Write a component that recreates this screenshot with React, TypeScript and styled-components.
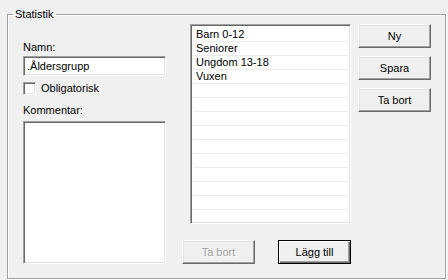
import React from 'react';
import styled, { createGlobalStyle } from 'styled-components';

const GlobalStyle = createGlobalStyle`
  html, body {
    margin: 0;
    padding: 0;
    background: #f0f0f0;
    width: 448px;
    height: 280px;
    overflow: hidden;
    font-family: "Liberation Sans", Arial, sans-serif;
    font-size: 11px;
    color: #000;
  }
`;

const Window = styled.div`
  padding: 8px 0 0 7px;
`;

const GroupBox = styled.fieldset`
  box-sizing: border-box;
  width: 439px;
  height: 271px;
  margin: 0;
  padding: 0 0 0 15px;
  border: 1px solid #a0a0a0;
  box-shadow: 1px 1px 0 #fff, inset 1px 1px 0 #fff;
`;

const Legend = styled.legend`
  margin-left: -10px;
  padding: 0 2px;
  line-height: 13px;
`;

const Body = styled.div`
  display: flex;
`;

const LeftColumn = styled.div`
  display: flex;
  flex-direction: column;
  width: 143px;
  padding-top: 20px;
`;

const Label = styled.div<{ $gap: number }>`
  line-height: 13px;
  margin-top: ${(p) => p.$gap}px;
`;

const sunken = `
  box-sizing: border-box;
  background: #fff;
  border-style: solid;
  border-width: 1px;
  border-color: #a0a0a0 #fff #fff #a0a0a0;
  box-shadow: inset 1px 1px 0 #696969, inset -1px -1px 0 #e3e3e3;
`;

const TextBox = styled.div`
  ${sunken}
  height: 20px;
  margin-top: 2px;
  padding: 3px 0 0 3px;
  line-height: 13px;
`;

const CheckRow = styled.label`
  display: flex;
  align-items: center;
  gap: 5px;
  margin-top: 6px;
  height: 13px;
  line-height: 13px;
`;

const CheckBox = styled.span`
  ${sunken}
  width: 13px;
  height: 13px;
`;

const TextArea = styled.div`
  ${sunken}
  height: 143px;
  margin-top: 4px;
`;

const MiddleColumn = styled.div`
  display: flex;
  flex-direction: column;
  width: 169px;
  margin-left: 16px;
  padding-top: 3px;
`;

const ListBox = styled.div`
  ${sunken}
  width: 161px;
  height: 200px;
  margin-left: 8px;
  padding: 3px 2px 0 2px;
  overflow: hidden;
`;

const ListRow = styled.div`
  height: 13px;
  line-height: 13px;
  padding-left: 3px;
  border-bottom: 1px solid #ebebeb;
  white-space: nowrap;
`;

const BottomButtons = styled.div`
  display: flex;
  justify-content: space-between;
  margin-top: 16px;
`;

const RightColumn = styled.div`
  display: flex;
  flex-direction: column;
  gap: 8px;
  margin-left: 7px;
  padding-top: 3px;
`;

const Button = styled.button<{ $default?: boolean }>`
  box-sizing: border-box;
  width: 73px;
  height: 24px;
  padding: 0;
  background: #f0f0f0;
  font-family: inherit;
  font-size: 11px;
  color: #000;
  border-style: solid;
  border-width: 1px;
  border-color: ${(p) => (p.$default ? '#000' : '#fff #696969 #696969 #fff')};
  box-shadow: ${(p) =>
    p.$default
      ? 'inset 1px 1px 0 #fff, inset -1px -1px 0 #696969, inset -2px -2px 0 #a0a0a0'
      : 'inset -1px -1px 0 #a0a0a0, inset 1px 1px 0 #e3e3e3'};

  &:disabled {
    color: #a0a0a0;
    text-shadow: 1px 1px 0 #fff;
  }
`;

const items = ['Barn 0-12', 'Seniorer', 'Ungdom 13-18', 'Vuxen'];

const App = () => {
  const rows = Array.from({ length: 15 }, (_, i) => items[i] ?? '');

  return (
    <Window>
      <GlobalStyle />
      <GroupBox>
        <Legend>Statistik</Legend>
        <Body>
          <LeftColumn>
            <Label $gap={0}>Namn:</Label>
            <TextBox>.Åldersgrupp</TextBox>
            <CheckRow>
              <CheckBox />
              Obligatorisk
            </CheckRow>
            <Label $gap={9}>Kommentar:</Label>
            <TextArea />
          </LeftColumn>
          <MiddleColumn>
            <ListBox>
              {rows.map((text, i) => (
                <ListRow key={i}>{text}</ListRow>
              ))}
            </ListBox>
            <BottomButtons>
              <Button type="button" disabled>
                Ta bort
              </Button>
              <Button type="button" $default>
                Lägg till
              </Button>
            </BottomButtons>
          </MiddleColumn>
          <RightColumn>
            <Button type="button">Ny</Button>
            <Button type="button">Spara</Button>
            <Button type="button">Ta bort</Button>
          </RightColumn>
        </Body>
      </GroupBox>
    </Window>
  );
};

export default App;
